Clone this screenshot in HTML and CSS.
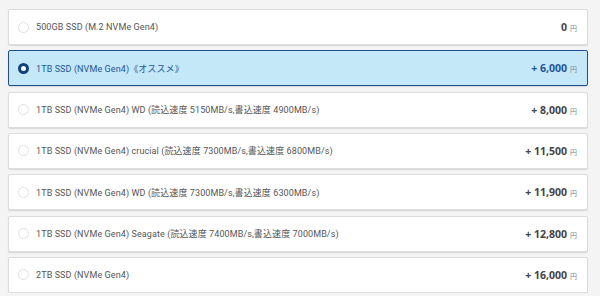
FILE: index.html
```html
<!DOCTYPE html>
<html lang="ja">
<head>
  <meta charset="UTF-8">
  <meta name="viewport" content="width=device-width, initial-scale=1.0">
  <title>SSD選択</title>
  <link rel="stylesheet" href="styles.css">
</head>
<body>
  <!-- ストレージ選択リスト -->
  <div class="options">
    <label class="option">
      <span class="radio"></span>
      <span class="name">500GB SSD (M.2 NVMe Gen4)</span>
      <span class="price">0<small>円</small></span>
    </label>
    <label class="option selected">
      <span class="radio"></span>
      <span class="name">1TB SSD (NVMe Gen4)《オススメ》</span>
      <span class="price">+ 6,000<small>円</small></span>
    </label>
    <label class="option">
      <span class="radio"></span>
      <span class="name">1TB SSD (NVMe Gen4) WD (読込速度 5150MB/s,書込速度 4900MB/s)</span>
      <span class="price">+ 8,000<small>円</small></span>
    </label>
    <label class="option">
      <span class="radio"></span>
      <span class="name">1TB SSD (NVMe Gen4) crucial (読込速度 7300MB/s,書込速度 6800MB/s)</span>
      <span class="price">+ 11,500<small>円</small></span>
    </label>
    <label class="option">
      <span class="radio"></span>
      <span class="name">1TB SSD (NVMe Gen4) WD (読込速度 7300MB/s,書込速度 6300MB/s)</span>
      <span class="price">+ 11,900<small>円</small></span>
    </label>
    <label class="option">
      <span class="radio"></span>
      <span class="name">1TB SSD (NVMe Gen4) Seagate (読込速度 7400MB/s,書込速度 7000MB/s)</span>
      <span class="price">+ 12,800<small>円</small></span>
    </label>
    <label class="option">
      <span class="radio"></span>
      <span class="name">2TB SSD (NVMe Gen4)</span>
      <span class="price">+ 16,000<small>円</small></span>
    </label>
  </div>
</body>
</html>
```

FILE: styles.css
```css
/* 全体 */
body {
  margin: 0;
  padding: 9px 12px 0 8px;
  background-color: #f4f4f4;
  font-family: Roboto, "Noto Sans CJK JP", sans-serif;
}

/* リスト */
.options {
  display: flex;
  flex-direction: column;
  gap: 5.33px;
}

/* 各項目 */
.option {
  display: flex;
  align-items: center;
  height: 36px;
  box-sizing: border-box;
  padding: 0 10px 0 9px;
  background-color: #fff;
  border: 1px solid #dcdcdc;
  border-radius: 2px;
  box-shadow: 0 1px 1px rgba(0, 0, 0, 0.12);
  cursor: pointer;
}

/* ラジオボタン */
.radio {
  width: 11px;
  height: 11px;
  box-sizing: border-box;
  border: 1px solid #e0e0e0;
  border-radius: 50%;
  background: #fff;
  margin-right: 7px;
  flex-shrink: 0;
}

/* 商品名 */
.name {
  flex: 1;
  font-size: 9px;
  color: #555;
  letter-spacing: 0.1px;
}

/* 価格 */
.price {
  font-family: "Open Sans", sans-serif;
  font-weight: 700;
  font-size: 10.5px;
  color: #444;
}

.price small {
  font-family: "Noto Sans CJK JP", sans-serif;
  font-weight: 400;
  font-size: 7px;
  color: #888;
  margin-left: 3px;
}

/* 選択中 */
.option.selected {
  background-color: #c4e8f8;
  border-color: #1d4f91;
}

.option.selected .radio {
  border: 3px solid #123f7e;
  background: #fff;
}

.option.selected .name,
.option.selected .price {
  color: #1d5596;
}
```
